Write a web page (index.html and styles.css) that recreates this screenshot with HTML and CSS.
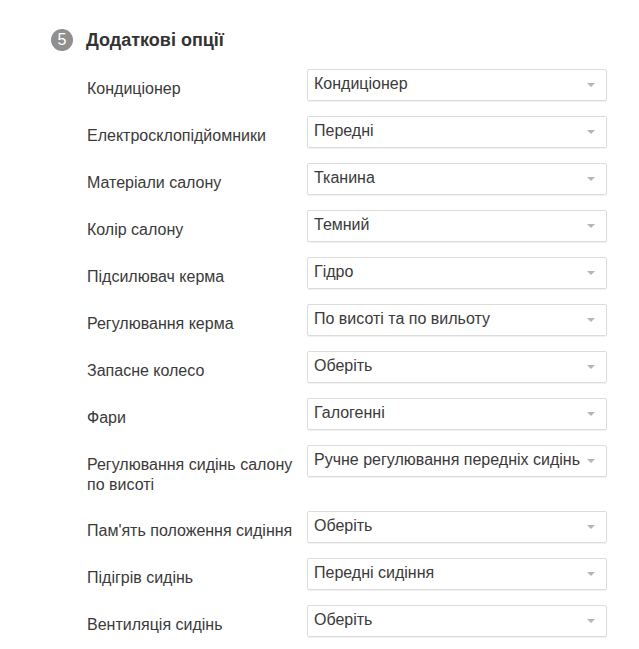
FILE: index.html
```html
<!DOCTYPE html>
<html lang="uk">
<head>
<meta charset="utf-8">
<link rel="stylesheet" href="styles.css">
</head>
<body>
<div class="section">
  <div class="head">
    <span class="num">5</span>
    <h2 class="title">Додаткові опції</h2>
  </div>
  <div class="rows">
    <div class="row"><div class="label">Кондиціонер</div><div class="select"><span>Кондиціонер</span><i class="arrow"></i></div></div>
    <div class="row"><div class="label">Електросклопідйомники</div><div class="select"><span>Передні</span><i class="arrow"></i></div></div>
    <div class="row"><div class="label">Матеріали салону</div><div class="select"><span>Тканина</span><i class="arrow"></i></div></div>
    <div class="row"><div class="label">Колір салону</div><div class="select"><span>Темний</span><i class="arrow"></i></div></div>
    <div class="row"><div class="label">Підсилювач керма</div><div class="select"><span>Гідро</span><i class="arrow"></i></div></div>
    <div class="row"><div class="label">Регулювання керма</div><div class="select"><span>По висоті та по вильоту</span><i class="arrow"></i></div></div>
    <div class="row"><div class="label">Запасне колесо</div><div class="select"><span>Оберіть</span><i class="arrow"></i></div></div>
    <div class="row"><div class="label">Фари</div><div class="select"><span>Галогенні</span><i class="arrow"></i></div></div>
    <div class="row"><div class="label">Регулювання сидінь салону по висоті</div><div class="select"><span>Ручне регулювання передніх сидінь</span><i class="arrow"></i></div></div>
    <div class="row"><div class="label">Пам'ять положення сидіння</div><div class="select"><span>Оберіть</span><i class="arrow"></i></div></div>
    <div class="row"><div class="label">Підігрів сидінь</div><div class="select"><span>Передні сидіння</span><i class="arrow"></i></div></div>
    <div class="row"><div class="label">Вентиляція сидінь</div><div class="select"><span>Оберіть</span><i class="arrow"></i></div></div>
  </div>
</div>
</body>
</html>
```
FILE: styles.css
```css
html, body {
  margin: 0;
  padding: 0;
  background: #fff;
}
body {
  font-family: "Liberation Sans", Arial, sans-serif;
  color: #3a3a3a;
  width: 639px;
  height: 649px;
  overflow: hidden;
}
.section {
  padding: 28px 0 0 51px;
}
.head {
  display: flex;
  align-items: center;
  gap: 13px;
  height: 24px;
}
.num {
  width: 22px;
  height: 22px;
  border-radius: 50%;
  background: #8f8f8f;
  color: #fff;
  font-size: 16px;
  line-height: 22px;
  text-align: center;
}
.title {
  margin: 0;
  font-size: 18px;
  font-weight: bold;
  color: #333;
}
.rows {
  margin-top: 17px;
  padding-left: 36px;
  display: flex;
  flex-direction: column;
  gap: 15px;
}
.row {
  display: grid;
  grid-template-columns: 220px 300px;
  align-items: start;
}
.label {
  padding-top: 10px;
  padding-bottom: 1px;
  font-size: 16px;
  line-height: 20px;
  color: #3a3a3a;
  padding-right: 8px;
}
.select {
  position: relative;
  height: 30px;
  border: 1px solid #dcdcdc;
  border-radius: 2px;
  box-shadow: 0 1px 1px rgba(0,0,0,0.06);
  display: flex;
  align-items: center;
  padding-left: 6px;
  font-size: 16px;
  color: #3a3a3a;
  white-space: nowrap;
  overflow: hidden;
  box-sizing: content-box;
  width: 292px;
}
.select span {
  flex: 1;
  overflow: hidden;
  margin-top: -2px;
}
.arrow {
  width: 0;
  height: 0;
  border-left: 4px solid transparent;
  border-right: 4px solid transparent;
  border-top: 4px solid #b5b5b5;
  margin: 0 11px 0 4px;
  flex: none;
}
```
